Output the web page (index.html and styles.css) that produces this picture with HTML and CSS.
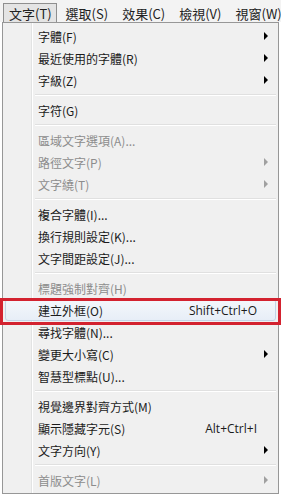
FILE: index.html
```html
<!DOCTYPE html>
<html lang="zh-Hant">
<head>
    <meta charset="UTF-8">
    <meta name="viewport" content="width=device-width, initial-scale=1.0">
    <title>文字選單</title>
    <link rel="stylesheet" href="styles.css">
</head>
<body>

    <div class="menubar">
        <div class="menubar-item open">文字(T)</div>
        <div class="menubar-item">選取(S)</div>
        <div class="menubar-item">效果(C)</div>
        <div class="menubar-item">檢視(V)</div>
        <div class="menubar-item">視窗(W)</div>
    </div>

    <div class="dropdown">
        <div class="item"><span class="label">字體(F)</span><span class="arrow"></span></div>
        <div class="item"><span class="label">最近使用的字體(R)</span><span class="arrow"></span></div>
        <div class="item"><span class="label">字級(Z)</span><span class="arrow"></span></div>
        <div class="sep"></div>

        <div class="item"><span class="label">字符(G)</span></div>
        <div class="sep"></div>

        <div class="item disabled"><span class="label">區域文字選項(A)...</span></div>
        <div class="item disabled"><span class="label">路徑文字(P)</span><span class="arrow"></span></div>
        <div class="item disabled"><span class="label">文字繞(T)</span><span class="arrow"></span></div>
        <div class="sep"></div>

        <div class="item"><span class="label">複合字體(I)...</span></div>
        <div class="item"><span class="label">換行規則設定(K)...</span></div>
        <div class="item"><span class="label">文字間距設定(J)...</span></div>
        <div class="sep"></div>

        <div class="item disabled"><span class="label">標題強制對齊(H)</span></div>
        <div class="item hover marked"><span class="label">建立外框(O)</span><span class="shortcut">Shift+Ctrl+O</span></div>
        <div class="item"><span class="label">尋找字體(N)...</span></div>
        <div class="item"><span class="label">變更大小寫(C)</span><span class="arrow"></span></div>
        <div class="item"><span class="label">智慧型標點(U)...</span></div>
        <div class="sep"></div>

        <div class="item"><span class="label">視覺邊界對齊方式(M)</span></div>
        <div class="item"><span class="label">顯示隱藏字元(S)</span><span class="shortcut">Alt+Ctrl+I</span></div>
        <div class="item"><span class="label">文字方向(Y)</span><span class="arrow"></span></div>
        <div class="sep"></div>

        <div class="item disabled"><span class="label">首版文字(L)</span><span class="arrow"></span></div>
    </div>

</body>
</html>
```

FILE: styles.css
```css
body {
    margin: 0;
    padding: 0;
    background-color: #ffffff;
    font-family: 'Noto Sans CJK TC', 'Noto Sans', sans-serif;
    font-size: 12px;
    color: #1b1b1b;
}

.menubar {
    display: flex;
    height: 22px;
    padding-left: 3px;
    background-color: #f3f3f3;
    overflow: hidden;
}

.menubar-item {
    flex-shrink: 0;
    white-space: nowrap;
    height: 19px;
    line-height: 19px;
    margin-top: 3px;
    padding: 0 4px 0 5px;
    margin-right: 3px;
    border: 1px solid transparent;
    border-bottom: none;
    font-size: 13px;
    color: #222;
}

.menubar-item.open {
    background-color: #e4e4e4;
    border-color: #8f8f8f;
}

.dropdown {
    width: 271px;
    margin-left: 2px;
    padding: 2px;
    border: 1px solid #979797;
    background-color: #f0f0f0;
    background-image: linear-gradient(to right,
        transparent 28px, #e2e3e3 28px, #e2e3e3 29px,
        #ffffff 29px, #ffffff 30px, transparent 30px);
}

.item {
    display: flex;
    align-items: center;
    height: 22px;
    padding-left: 32px;
    padding-right: 7px;
    border: 1px solid transparent;
    box-sizing: border-box;
    white-space: nowrap;
}

.item .label {
    flex-grow: 1;
}

.item .shortcut {
    font-family: 'Open Sans', 'DejaVu Sans', sans-serif;
    margin-right: 11px;
    color: #1b1b1b;
}

.item .arrow {
    width: 0;
    height: 0;
    border-top: 4px solid transparent;
    border-bottom: 4px solid transparent;
    border-left: 4px solid #000;
}

.item.disabled {
    color: #8d8d8d;
}

.item.disabled .arrow {
    border-left-color: #a0a0a0;
}

.item.hover {
    border-color: #c3d3e6;
    border-radius: 3px;
    background: linear-gradient(#f4f7fb, #e7eef7);
}

.marked {
    position: relative;
}

/* red annotation frame drawn over the menu */
.marked::after {
    content: '';
    position: absolute;
    left: -6px;
    right: -6px;
    top: -2px;
    bottom: -5px;
    border: 3px solid #d3222f;
}

.sep {
    height: 8px;
    margin-left: 30px;
    background: linear-gradient(to bottom,
        transparent 3px, #e0e0e0 3px, #e0e0e0 4px,
        #ffffff 4px, #ffffff 5px, transparent 5px);
}
```
